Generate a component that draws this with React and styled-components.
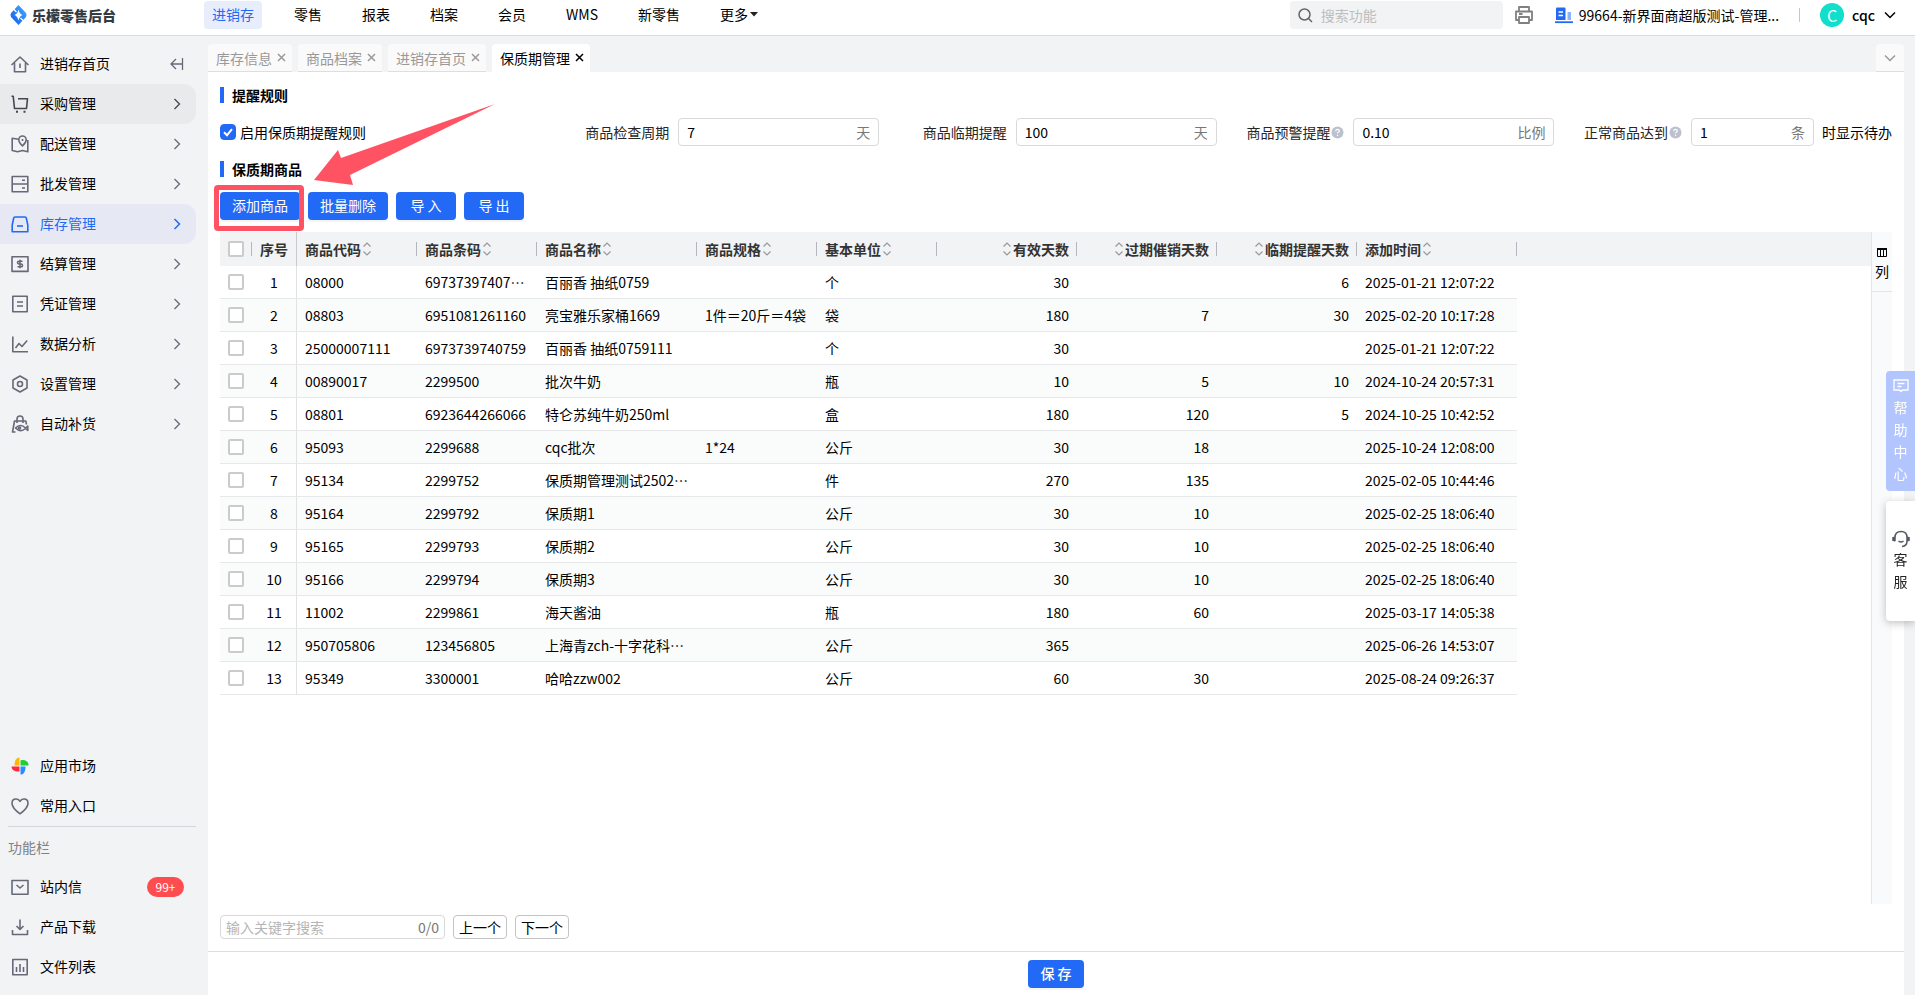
import React, { useState } from "react";
import styled, { createGlobalStyle } from "styled-components";

const GlobalStyle = createGlobalStyle`
  * {
    box-sizing: border-box;
  }

  body {
    margin: 0;
    font-family: "Noto Sans CJK SC", "Noto Sans", sans-serif;
    font-size: 14px;
    line-height: 20px;
    color: #000;
    background: #f1f3f5;
  }

  button,
  input {
    font: inherit;
    color: inherit;
  }

  button {
    padding: 0;
    border: 0;
    background: none;
    cursor: pointer;
  }

  a {
    color: inherit;
    text-decoration: none;
  }

  svg {
    display: block;
    flex: none;
  }
`;

const Page = styled.div`
  display: flex;
  flex-direction: column;
  min-height: 100vh;
`;

const Header = styled.header`
  display: flex;
  align-items: center;
  height: 36px;
  padding: 0 18px 5px 10px;
  background: #fff;
  border-bottom: 1px solid #d9dbde;
`;

const Brand = styled.a`
  display: flex;
  align-items: center;
  gap: 5px;
  width: 194px;
  font-weight: 900;
  color: #333a42;
`;

const Nav = styled.nav`
  display: flex;
  flex: 1;
  gap: 24px;
`;

const NavLink = styled.a`
  display: flex;
  align-items: center;
  gap: 2px;
  padding: 3px 8px 5px;
  border-radius: 4px;
  white-space: nowrap;
  color: ${({ $active }) => ($active ? "#2269f5" : "#000")};
  background: ${({ $active }) => ($active ? "#e7edfb" : "transparent")};
`;

const SearchBox = styled.label`
  display: flex;
  align-items: center;
  gap: 8px;
  width: 213px;
  height: 28px;
  padding: 0 8px;
  border-radius: 4px;
  background: #f1f3f5;

  input {
    flex: 1;
    min-width: 0;
    padding: 0;
    border: 0;
    outline: 0;
    background: none;
  }

  input::placeholder {
    color: #bdbdbd;
  }
`;

const PrintButton = styled.button`
  margin: 0 22px 0 12px;
`;

const Shop = styled.button`
  display: flex;
  align-items: center;
  gap: 6px;
  padding-right: 20px;
  white-space: nowrap;
`;

const HeaderLine = styled.span`
  width: 1px;
  height: 14px;
  background: #c4c6ca;
`;

const User = styled.button`
  display: flex;
  align-items: center;
  gap: 8px;
  margin-left: 20px;
  font-weight: 500;
`;

const Avatar = styled.span`
  width: 24px;
  height: 24px;
  border-radius: 50%;
  font-size: 16px;
  font-weight: 400;
  line-height: 24px;
  text-align: center;
  color: #fff;
  background: #0fdfcb;
`;

const Body = styled.div`
  display: flex;
  flex: 1;
`;

const Sidebar = styled.aside`
  display: flex;
  flex-direction: column;
  flex: none;
  width: 208px;
  padding: 8px 12px 8px 0;
`;

const Menu = styled.div`
  display: flex;
  flex-direction: column;
  flex: ${({ $grow }) => ($grow ? 1 : "none")};
`;

const MenuItem = styled.a`
  display: flex;
  align-items: center;
  gap: 10px;
  height: 40px;
  padding: 0 12px 0 10px;
  border-radius: 0 12px 12px 0;
  color: ${({ $state }) => ($state === "active" ? "#2269f5" : "#000")};
  background: ${({ $state }) =>
    $state === "active" ? "#e6e9f4" : $state === "hover" ? "#e9eaec" : "none"};

  > svg {
    color: ${({ $state }) =>
      $state === "active" ? "#2269f5" : $state === "hover" ? "#44474f" : "#666a78"};
  }
`;

const MenuText = styled.span`
  flex: 1;
  padding-bottom: 2px;
`;

const MenuLine = styled.hr`
  width: 188px;
  margin: 0 0 0 8px;
  border: 0;
  border-top: 1px solid #d5d6d9;
`;

const MenuTitle = styled.div`
  height: 40px;
  padding-left: 8px;
  line-height: 40px;
  color: #808285;
`;

const Badge = styled.span`
  width: 37px;
  height: 20px;
  border-radius: 10px;
  font-size: 12px;
  line-height: 20px;
  text-align: center;
  color: #fff;
  background: #ff4d4f;
`;

const Main = styled.main`
  display: flex;
  flex-direction: column;
  flex: 1;
  min-width: 0;
  padding: 8px 11px 0 0;
`;

const Tabs = styled.div`
  display: flex;
  gap: 6px;
`;

const Tab = styled.button`
  display: flex;
  align-items: center;
  gap: 5px;
  height: 28px;
  padding: 0 6px 0 8px;
  border-radius: 4px 4px 0 0;
  border-bottom: 1px solid ${({ $active }) => ($active ? "#fff" : "#dcdee0")};
  white-space: nowrap;
  color: ${({ $active }) => ($active ? "#000" : "#999")};
  background: ${({ $active }) => ($active ? "#fff" : "#fafafa")};
`;

const TabMore = styled(Tab)`
  justify-content: center;
  width: 28px;
  margin-left: auto;
  padding: 0;
`;

const Content = styled.div`
  display: flex;
  flex-direction: column;
  flex: 1;
  padding: 12px;
  background: #fff;
`;

const SectionTitle = styled.h2`
  display: flex;
  align-items: center;
  gap: 8px;
  margin: 0;
  font-size: 14px;
  font-weight: 700;
  line-height: 22px;

  &::before {
    content: "";
    width: 4px;
    height: 16px;
    background: #2269f5;
  }
`;

const Rules = styled.div`
  display: grid;
  grid-template-columns: repeat(5, 1fr);
  gap: 16px;
  align-items: center;
  margin: 12px 0;
`;

const CheckLabel = styled.label`
  display: flex;
  align-items: center;
  gap: 4px;
`;

const RuleCheck = styled.input`
  appearance: none;
  width: 16px;
  height: 16px;
  margin: 0;
  border-radius: 4px;
  border: 1px solid #2269f5;

  &:checked {
    background: #2269f5
      url("data:image/svg+xml,%3Csvg xmlns='http://www.w3.org/2000/svg' viewBox='0 0 14 14'%3E%3Cpath d='M3 7.2l3 3 5-6' fill='none' stroke='white' stroke-width='2'/%3E%3C/svg%3E")
      center / 14px 14px no-repeat;
  }
`;

const Field = styled.div`
  display: grid;
  grid-template-columns: 3fr 5fr;
  align-items: center;
  white-space: nowrap;
`;

const FieldLabel = styled.label`
  display: flex;
  align-items: center;
  justify-content: flex-end;
  gap: 1px;
  padding-right: 9px;
  color: #262626;
`;

const FieldControl = styled.div`
  display: flex;
  align-items: center;
  gap: 8px;
  min-width: 0;
`;

const InputWrap = styled.div`
  display: flex;
  align-items: center;
  flex: 1;
  min-width: 0;
  height: 28px;
  padding: 0 8px;
  border: 1px solid #d9d9d9;
  border-radius: 4px;

  input {
    flex: 1;
    width: 0;
    min-width: 0;
    padding: 0;
    border: 0;
    outline: 0;
    background: none;
  }
`;

const Unit = styled.span`
  color: #777;
`;

const Toolbar = styled.div`
  display: flex;
  gap: 8px;
  margin: 12px 0;
`;

const Marked = styled.div`
  position: relative;
  display: flex;
`;

const MarkBox = styled.span`
  position: absolute;
  inset: -7px -4px -11px -6px;
  border: 5px solid #ff5364;
  border-radius: 4px;
  pointer-events: none;
`;

const MarkArrow = styled.svg`
  position: absolute;
  left: 92px;
  bottom: 34px;
  pointer-events: none;
`;

const Button = styled.button`
  height: 28px;
  padding: 0 12px 2px;
  border-radius: 4px;
  color: #fff;
  background: #2269f5;
  box-shadow: 0 2px 0 rgba(0, 0, 0, 0.04);
`;

const ShortButton = styled(Button)`
  width: 60px;
`;

const Grid = styled.div`
  display: flex;
  flex: 1;
`;

const TableArea = styled.div`
  flex: 1;
  min-width: 0;
  background: linear-gradient(#f1f3f5 34px, transparent 34px);
`;

const Table = styled.table`
  width: 1297px;
  table-layout: fixed;
  border-collapse: separate;
  border-spacing: 0;
`;

const Th = styled.th`
  height: 34px;
  padding: 0;
  font-weight: 700;
  color: #333;
  border-right: ${({ $pinned }) => ($pinned ? "1px solid #c8cacd" : 0)};
`;

const HeadCell = styled.div`
  display: flex;
  flex-direction: ${({ $right }) => ($right ? "row-reverse" : "row")};
  align-items: center;
  height: 14px;
  gap: 1px;
  padding: 0 7px 0 8px;
  white-space: nowrap;
  border-right: ${({ $line }) => ($line ? "1px solid #b4b7bd" : 0)};
`;

const Row = styled.tr`
  background: #fff;

  &:nth-child(even) {
    background: #fafbfb;
  }
`;

const Td = styled.td`
  height: 33px;
  padding: 0 8px;
  border-bottom: 1px solid #e6e8ea;
  border-right: ${({ $pinned }) => ($pinned ? "1px solid #e0e2e4" : 0)};
  white-space: nowrap;
  text-align: ${({ $align }) => $align || "left"};
`;

const RowCheck = styled.input`
  appearance: none;
  display: block;
  width: 16px;
  height: 16px;
  margin: 0;
  border: 2px solid #cbcbcb;
  border-radius: 2px;
  background: #fff;

  &:checked {
    border-color: #2269f5;
    background: #2269f5;
  }
`;

const ColumnPanel = styled.div`
  width: 21px;
  border-left: 1px solid #e3e5e8;
  background: #f9fafc;
`;

const ColumnButton = styled.button`
  display: flex;
  flex-direction: column;
  align-items: center;
  gap: 4px;
  width: 100%;
  padding: 16px 0 10px;
  border-bottom: 1px solid #e3e5e8;
`;

const Finder = styled.div`
  display: flex;
  gap: 8px;
  margin-top: 11px;
`;

const FindBox = styled(InputWrap)`
  flex: none;
  width: 225px;
  height: 24px;
  padding: 0 5px;

  input::placeholder {
    color: #b5b5b5;
  }
`;

const FindButton = styled.button`
  height: 24px;
  padding: 0 5px;
  border: 1px solid #c4c4c4;
  border-radius: 4px;
`;

const Footer = styled.footer`
  display: flex;
  justify-content: center;
  height: 44px;
  padding: 8px;
  border-top: 1px solid #dddee0;
  background: #fff;
`;

const SaveButton = styled(Button)`
  width: 56px;
  font-weight: 500;
`;

const SideDock = styled.div`
  position: fixed;
  top: 371px;
  right: 0;
  display: flex;
  flex-direction: column;
  gap: 10px;
`;

const DockButton = styled.button`
  display: flex;
  flex-direction: column;
  align-items: center;
  justify-content: center;
  width: 29px;
  height: 120px;
  padding-bottom: ${({ $help }) => ($help ? "2px" : 0)};
  border-radius: 4px 0 0 4px;
  line-height: 22px;
  color: ${({ $help }) => ($help ? "#fff" : "#222")};
  background: ${({ $help }) => ($help ? "#b3c5ff" : "#fff")};
  box-shadow: ${({ $help }) => ($help ? "none" : "0 2px 8px rgba(0, 0, 0, 0.25)")};
`;

const navItems = ["进销存", "零售", "报表", "档案", "会员", "WMS", "新零售", "更多"];

const iconShapes = {
  home: (
    <>
      <path d="M.5 10 9 2l8.500 8M3.500 8v8.800h11V8" />
      <path d="M9 8.500v4.500" />
    </>
  ),
  cart: (
    <>
      <path d="M.5 1.200h1.700L3.500 13.500h12l1-9.800H7" />
      <path d="M5 16.700h2M12.500 16.700h2" strokeWidth="2" />
    </>
  ),
  map: (
    <>
      <path d="M7.500 4.200 1.200 3.200v12.300l5.300 1.300 5-1.300 5.300 1.300V5" />
      <path d="M11.500 10.800S7.800 7.500 7.800 4.700a3.700 3.700 0 0 1 7.400 0c0 2.800-3.700 6.100-3.700 6.100z" />
      <path d="M11.500 4v2" />
    </>
  ),
  server: (
    <>
      <path d="M1.200 1.500h15.600v15.300H1.200zM1.200 9h15.600" />
      <path d="M11 5.300h3M11 13h3" />
    </>
  ),
  stock: (
    <>
      <path d="M4 2h10q1 0 1.300 1l1.500 7v6.800H1.200V10l1.500-7q.3-1 1.300-1z" />
      <path d="M6 11h6" />
    </>
  ),
  money: (
    <>
      <path d="M1 1.800h16v14.600H1z" />
      <path d="M11.500 6.300H8q-1.500 0-1.500 1.300T8 9h2q1.500 0 1.500 1.400T10 11.800H6.500M9 4.800v8.500" />
    </>
  ),
  doc: <path d="M1.800 1.200h14.400v15.600H1.800zM6 7h6M6 11h6" />,
  chart: <path d="M1.800 1.500v15.300H17M4.500 13 8 8.500l3 3L16.200 5.500" />,
  hex: (
    <>
      <path d="m9 1 7 4v8l-7 4-7-4V5z" />
      <circle cx="9" cy="9" r="2.500" />
    </>
  ),
  bag: (
    <>
      <path d="M15.500 9.500 14.800 6H3.500L1.500 17h3M6 8V4q0-3 3-3t3 3v4" />
      <path d="M4.500 13q5-5 10 0l2.300-2v4.500L14.500 13.500q-5 4.500-10-.5z" />
      <circle cx="8.500" cy="13" r="1" />
    </>
  ),
  heart: (
    <path d="M9 16.800C4.500 13.500 1 10 1 6.200 1 1.500 7 .5 9 4.400 11 .5 17 1.500 17 6.200c0 3.800-3.500 7.300-8 10.600z" />
  ),
  mail: <path d="M1 2.500h16v13.800H1zM5.500 7 9 10l3.500-3" />,
  download: <path d="M9 1.500v10M5.500 8 9 11.500 12.500 8M1.500 12v4.500h15V12" />,
  list: <path d="M1.800 1.500h14.400v15.300H1.800zM5.500 9v5M9 6v8M12.500 9v5" />,
};

const Icon = ({ name }) => (
  <svg width="20" height="18" viewBox="-1 0 20 18" fill="none" stroke="currentColor" strokeWidth="1.6" strokeLinejoin="round">
    {iconShapes[name]}
  </svg>
);

const MarketIcon = () => (
  <svg width="20" height="18" viewBox="-1 0 20 18">
    <path d="M8.5 8.500V.5C4.500.5 3.500 5 3.500 8.500z" fill="#ffb70a" />
    <path d="M9.500 8.500V3.500C14 2 18 5 17.500 8.500z" fill="#20cf33" />
    <path d="M9.500 9.500H14.500C14.500 14 13 18 9.500 17.500z" fill="#2b8cff" />
    <path d="M8.500 9.500V14.500C4 15 .5 13 .5 9.500z" fill="#fa2c3c" />
  </svg>
);

const Chevron = ({ down, muted }) => (
  <svg width="14" height="14" viewBox="0 0 14 14" fill="none" stroke="currentColor" strokeWidth={muted ? 1.3 : 1.5}>
    <path d={down ? "m2 4.500 5 5 5-5" : "m4.500 2 5 5-5 5"} />
  </svg>
);

const CloseIcon = () => (
  <svg width="9" height="9" viewBox="0 0 9 9" stroke="currentColor" strokeWidth="1.5">
    <path d="m1 1 7 7M8 1 1 8" />
  </svg>
);

const SortIcon = () => (
  <svg width="10" height="14" viewBox="0 0 10 14" fill="none" stroke="#999" strokeWidth="1.2">
    <path d="M1.500 4.500 5 1l3.500 3.500M1.500 9.500 5 13l3.500-3.500" />
  </svg>
);

const HelpIcon = () => (
  <svg width="13" height="13" viewBox="0 0 13 13">
    <circle cx="6.500" cy="6.500" r="6" fill="#bcc1ce" />
    <path d="M4.700 5.200q0-1.900 1.800-1.900t1.800 1.600q0 .8-1 1.300-.8.400-.8 1.200M6.500 8.700v1.300" fill="none" stroke="#fff" strokeWidth="1.2" />
  </svg>
);

const menu = [
  ["采购管理", "cart", "hover"],
  ["配送管理", "map"],
  ["批发管理", "server"],
  ["库存管理", "stock", "active"],
  ["结算管理", "money"],
  ["凭证管理", "doc"],
  ["数据分析", "chart"],
  ["设置管理", "hex"],
  ["自动补货", "bag"],
];

const columns = [
  { title: "商品代码", width: 120 },
  { title: "商品条码", width: 120 },
  { title: "商品名称", width: 160 },
  { title: "商品规格", width: 120 },
  { title: "基本单位", width: 120 },
  { title: "有效天数", width: 140, right: true },
  { title: "过期催销天数", width: 140, right: true },
  { title: "临期提醒天数", width: 140, right: true },
  { title: "添加时间", width: 160 },
];

const goods = [
  ["08000", "69737397407…", "百丽香 抽纸0759", "", "个", "30", "", "6", "2025-01-21 12:07:22"],
  ["08803", "6951081261160", "亮宝雅乐家桶1669", "1件＝20斤＝4袋", "袋", "180", "7", "30", "2025-02-20 10:17:28"],
  ["25000007111", "6973739740759", "百丽香 抽纸0759111", "", "个", "30", "", "", "2025-01-21 12:07:22"],
  ["00890017", "2299500", "批次牛奶", "", "瓶", "10", "5", "10", "2024-10-24 20:57:31"],
  ["08801", "6923644266066", "特仑苏纯牛奶250ml", "", "盒", "180", "120", "5", "2024-10-25 10:42:52"],
  ["95093", "2299688", "cqc批次", "1*24", "公斤", "30", "18", "", "2025-10-24 12:08:00"],
  ["95134", "2299752", "保质期管理测试2502…", "", "件", "270", "135", "", "2025-02-05 10:44:46"],
  ["95164", "2299792", "保质期1", "", "公斤", "30", "10", "", "2025-02-25 18:06:40"],
  ["95165", "2299793", "保质期2", "", "公斤", "30", "10", "", "2025-02-25 18:06:40"],
  ["95166", "2299794", "保质期3", "", "公斤", "30", "10", "", "2025-02-25 18:06:40"],
  ["11002", "2299861", "海天酱油", "", "瓶", "180", "60", "", "2025-03-17 14:05:38"],
  ["950705806", "123456805", "上海青zch-十字花科…", "", "公斤", "365", "", "", "2025-06-26 14:53:07"],
  ["95349", "3300001", "哈哈zzw002", "", "公斤", "60", "30", "", "2025-08-24 09:26:37"],
];

const RuleField = ({ id, label, value, unit, help, after }) => (
  <Field>
    <FieldLabel htmlFor={id}>
      {label}
      {help && <HelpIcon />}
    </FieldLabel>
    <FieldControl>
      <InputWrap>
        <input id={id} defaultValue={value} />
        <Unit>{unit}</Unit>
      </InputWrap>
      {after && <span>{after}</span>}
    </FieldControl>
  </Field>
);

const TopBar = () => (
  <Header>
    <Brand href="#">
      <svg width="17" height="20" viewBox="0 0 17 20">
        <defs>
          <linearGradient id="logo" x1="0" y1="1" x2="1" y2="0">
            <stop offset="0.2" stopColor="#1b68f5" />
            <stop offset="1" stopColor="#45b0ff" />
          </linearGradient>
        </defs>
        <path d="M8.500 0 16 8q1 2 0 4l-7.500 8L1 12Q0 10 1 8z" fill="url(#logo)" />
        <path d="M8.500 4.500q1 4.500 4 5.500-3 1-4 5.500-1-4.500-4-5.500 3-1 4-5.500z" fill="#fff" />
        <path d="m3.500 4 3 3M13.500 16l-3-3" stroke="#fff" strokeWidth="1.2" />
      </svg>
      乐檬零售后台
    </Brand>
    <Nav>
      {navItems.map((item, i) => (
        <NavLink key={item} href="#" $active={i === 0}>
          {item}
          {item === "更多" && (
            <svg width="8" height="5" viewBox="0 0 8 5">
              <path d="M0 0h8L4 4.500z" fill="#222" />
            </svg>
          )}
        </NavLink>
      ))}
    </Nav>
    <SearchBox>
      <svg width="15" height="15" viewBox="0 0 15 15" fill="none" stroke="#666" strokeWidth="1.5">
        <circle cx="6.500" cy="6.500" r="5.500" />
        <path d="m10.500 10.500 3.500 3.500" />
      </svg>
      <input aria-label="搜索功能" placeholder="搜索功能" />
    </SearchBox>
    <PrintButton aria-label="打印">
      <svg width="18" height="18" viewBox="0 0 18 18" fill="none" stroke="#808080" strokeWidth="1.8" strokeLinejoin="round">
        <path d="M4 5.500V1h10v4.500M4 14H1V5.500h16V14h-3M4 11h10v6H4zM4 8h3.500" />
      </svg>
    </PrintButton>
    <Shop>
      <svg width="18" height="18" viewBox="0 0 18 18">
        <path d="M1 2.500q0-1 1-1h7.500q1 0 1 1V14H1z" fill="#2269f5" />
        <path d="M12.500 6H16v8h-3.500z" fill="#8eb2fb" />
        <path d="M0 16.200h18" stroke="#2269f5" strokeWidth="1.8" />
        <path d="M3.500 6H8M3.500 9.500H8" stroke="#fff" strokeWidth="1.5" />
      </svg>
      99664-新界面商超版测试-管理...
    </Shop>
    <HeaderLine />
    <User>
      <Avatar>C</Avatar>
      cqc
      <Chevron down />
    </User>
  </Header>
);

const SideMenu = () => (
  <Sidebar>
    <Menu $grow>
      <MenuItem href="#">
        <Icon name="home" />
        <MenuText>进销存首页</MenuText>
        <svg width="14" height="14" viewBox="0 0 14 14" fill="none" stroke="currentColor" strokeWidth="1.3">
          <path d="M12.500 1v12M12 7H1M6 2 1 7l5 5" />
        </svg>
      </MenuItem>
      {menu.map(([text, icon, state]) => (
        <MenuItem key={text} href="#" $state={state}>
          <Icon name={icon} />
          <MenuText>{text}</MenuText>
          <Chevron muted={state !== "active"} />
        </MenuItem>
      ))}
    </Menu>
    <Menu>
      <MenuItem href="#">
        <MarketIcon />
        <MenuText>应用市场</MenuText>
      </MenuItem>
      <MenuItem href="#">
        <Icon name="heart" />
        <MenuText>常用入口</MenuText>
      </MenuItem>
      <MenuLine />
      <MenuTitle>功能栏</MenuTitle>
      <MenuItem href="#">
        <Icon name="mail" />
        <MenuText>站内信</MenuText>
        <Badge>99+</Badge>
      </MenuItem>
      <MenuItem href="#">
        <Icon name="download" />
        <MenuText>产品下载</MenuText>
      </MenuItem>
      <MenuItem href="#">
        <Icon name="list" />
        <MenuText>文件列表</MenuText>
      </MenuItem>
    </Menu>
  </Sidebar>
);

const GoodsTable = () => (
  <Table>
    <colgroup>
      <col width="32" />
      <col width="45" />
      {columns.map((col) => (
        <col key={col.title} width={col.width} />
      ))}
    </colgroup>
    <thead>
      <tr>
        <Th>
          <HeadCell $line>
            <RowCheck type="checkbox" aria-label="全选" />
          </HeadCell>
        </Th>
        <Th $pinned>
          <HeadCell>序号</HeadCell>
        </Th>
        {columns.map((col) => (
          <Th key={col.title}>
            <HeadCell $line $right={col.right}>
              {col.title}
              <SortIcon />
            </HeadCell>
          </Th>
        ))}
      </tr>
    </thead>
    <tbody>
      {goods.map((item, i) => (
        <Row key={item[0]}>
          <Td>
            <RowCheck type="checkbox" aria-label={`选择 ${item[0]}`} />
          </Td>
          <Td $align="center" $pinned>
            {i + 1}
          </Td>
          {item.map((text, j) => (
            <Td key={columns[j].title} $align={columns[j].right ? "right" : "left"}>
              {text}
            </Td>
          ))}
        </Row>
      ))}
    </tbody>
  </Table>
);

const App = () => {
  const [enabled, setEnabled] = useState(true);

  return (
    <Page>
      <GlobalStyle />
      <TopBar />
      <Body>
        <SideMenu />
        <Main>
          <Tabs>
            {["库存信息", "商品档案", "进销存首页", "保质期管理"].map((tab, i) => (
              <Tab key={tab} $active={i === 3}>
                {tab}
                <CloseIcon />
              </Tab>
            ))}
            <TabMore aria-label="更多标签">
              <Chevron down />
            </TabMore>
          </Tabs>
          <Content>
            <SectionTitle>提醒规则</SectionTitle>
            <Rules>
              <CheckLabel>
                <RuleCheck type="checkbox" checked={enabled} onChange={() => setEnabled(!enabled)} />
                启用保质期提醒规则
              </CheckLabel>
              <RuleField id="period" label="商品检查周期" value="7" unit="天" />
              <RuleField id="near" label="商品临期提醒" value="100" unit="天" />
              <RuleField id="warn" label="商品预警提醒" value="0.10" unit="比例" help />
              <RuleField id="normal" label="正常商品达到" value="1" unit="条" help after="时显示待办" />
            </Rules>
            <SectionTitle>保质期商品</SectionTitle>
            <Toolbar>
              <Marked>
                <Button>添加商品</Button>
                <MarkBox />
                <MarkArrow width="184" height="84" viewBox="312 102 184 84">
                  <path d="M495 104 341 158l-3-8-24 30 39 5-3-10z" fill="#ff5364" />
                </MarkArrow>
              </Marked>
              <Button>批量删除</Button>
              <ShortButton>导 入</ShortButton>
              <ShortButton>导 出</ShortButton>
            </Toolbar>
            <Grid>
              <TableArea>
                <GoodsTable />
              </TableArea>
              <ColumnPanel>
                <ColumnButton>
                  <svg width="10" height="9" viewBox="0 0 10 9" fill="none" stroke="#000">
                    <path d="M.5 1v7.500h9V1M3.500 1v7.500M6.500 1v7.500" />
                    <path d="M0 1h10" strokeWidth="2" />
                  </svg>
                  列
                </ColumnButton>
              </ColumnPanel>
            </Grid>
            <Finder>
              <FindBox>
                <input aria-label="输入关键字搜索" placeholder="输入关键字搜索" />
                <Unit>0/0</Unit>
              </FindBox>
              <FindButton>上一个</FindButton>
              <FindButton>下一个</FindButton>
            </Finder>
          </Content>
          <Footer>
            <SaveButton>保 存</SaveButton>
          </Footer>
        </Main>
      </Body>
      <SideDock>
        <DockButton $help>
          <svg width="16" height="20" viewBox="0 1 16 20" fill="none" stroke="#fff" strokeWidth="1.3">
            <path d="M1 5h14v10H9.500L8 16.500 6.500 15H1zM4.500 8.500h7M4.500 11.500h4" />
          </svg>
          <span>帮</span>
          <span>助</span>
          <span>中</span>
          <span>心</span>
        </DockButton>
        <DockButton>
          <svg width="18" height="18" viewBox="0 0 18 18" fill="none" stroke="#555966" strokeWidth="1.5">
            <path d="M3 11V7.500C3 3.500 5.500 1.500 9 1.500s6 2 6 6V11q0 5-5 5.500M1 7v4M17 7v4M2.500 6.500v5M15.500 6.500v5M6.500 11q2.500 2 5 0" />
          </svg>
          <span>客</span>
          <span>服</span>
        </DockButton>
      </SideDock>
    </Page>
  );
};

export default App;
